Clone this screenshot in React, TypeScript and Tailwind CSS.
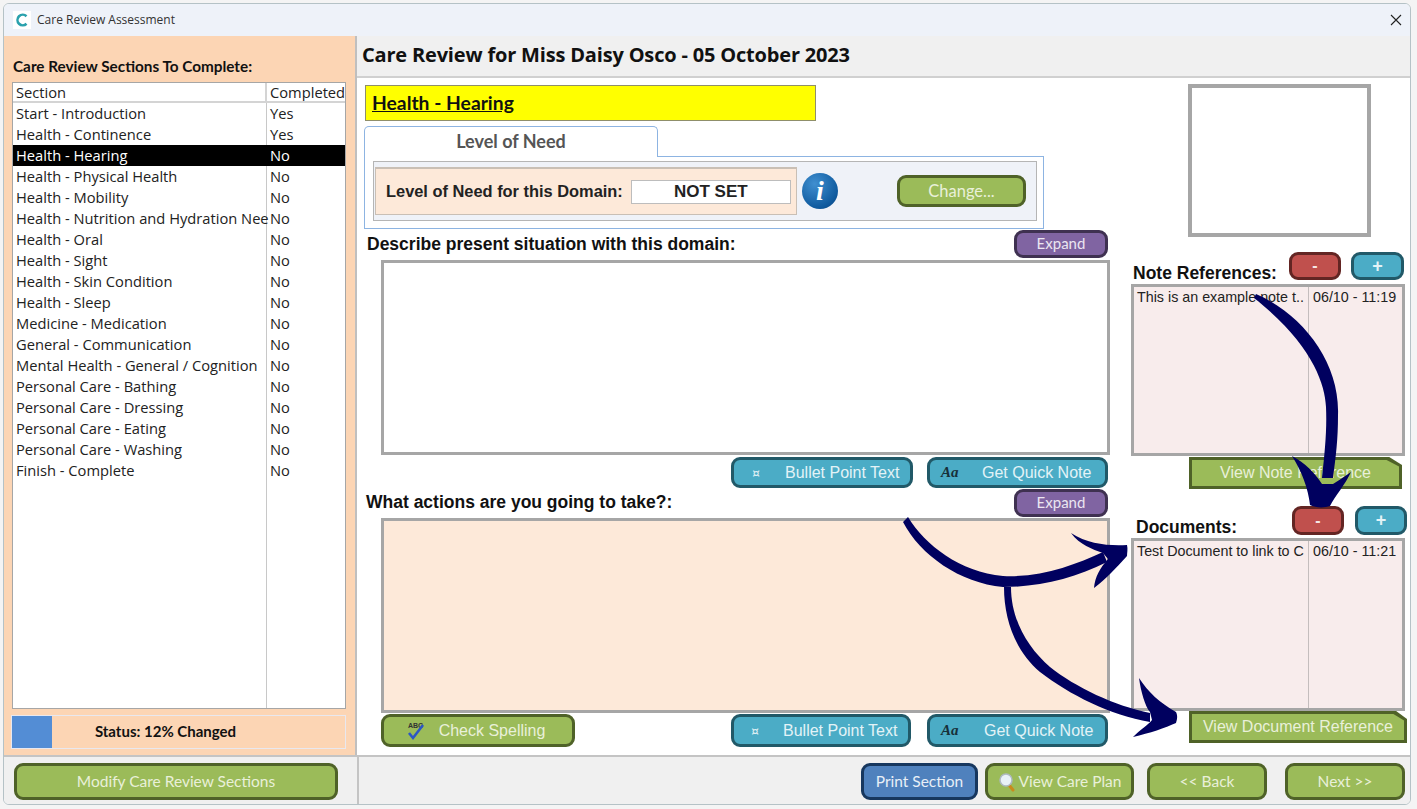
import type { ReactNode } from "react";

const sections: [string, string][] = [
  ["Start - Introduction", "Yes"],
  ["Health - Continence", "Yes"],
  ["Health - Hearing", "No"],
  ["Health - Physical Health", "No"],
  ["Health - Mobility", "No"],
  ["Health - Nutrition and Hydration Nee", "No"],
  ["Health - Oral", "No"],
  ["Health - Sight", "No"],
  ["Health - Skin Condition", "No"],
  ["Health - Sleep", "No"],
  ["Medicine - Medication", "No"],
  ["General - Communication", "No"],
  ["Mental Health - General / Cognition", "No"],
  ["Personal Care - Bathing", "No"],
  ["Personal Care - Dressing", "No"],
  ["Personal Care - Eating", "No"],
  ["Personal Care - Washing", "No"],
  ["Finish - Complete", "No"],
];

const green = "border-[#4f6228] bg-[#9bbb59] text-[#e9f0d9]";
const teal = "border-[#215968] bg-[#4bacc6] text-[#e3f3f7]";
const purple = "border-[#3f3151] bg-[#8064a2] text-[#ebe5f1]";
const red = "border-[#632523] bg-[#c0504d] text-[#f7e6e5]";
const blue = "border-[#17375e] bg-[#4f81bd] text-[#e8eff7]";

const calibri = "font-['Lato',sans-serif]";
const arial = "font-['Liberation_Sans',Arial,sans-serif]";
const segoe = "font-['Open_Sans',sans-serif]";

function Btn({
  color,
  className,
  children,
}: {
  color: string;
  className: string;
  children: ReactNode;
}) {
  return (
    <button
      type="button"
      className={`flex shrink-0 items-center justify-center rounded-[9px] border-[3px] ${color} ${className}`}
    >
      {children}
    </button>
  );
}

function BulletBtn({ className, iconWidth }: { className: string; iconWidth: string }) {
  return (
    <Btn color={teal} className={`h-full text-[16px] ${arial} ${className}`}>
      <span className={`${iconWidth} pr-[7px] text-center font-['DejaVu_Sans',sans-serif] text-[12px]`}>¤</span>
      <span className="flex-1 text-left">Bullet Point Text</span>
    </Btn>
  );
}

function NoteBtn({ className, iconWidth }: { className: string; iconWidth: string }) {
  return (
    <Btn color={teal} className={`h-full text-[16px] ${arial} ${className}`}>
      <span className={`${iconWidth} pl-[11px] text-left font-['Liberation_Serif',serif] text-[15px] font-bold italic text-[#17303a]`}>
        Aa
      </span>
      <span className="flex-1 text-left">Get Quick Note</span>
    </Btn>
  );
}

function RefList({ text, time, className }: { text: string; time: string; className: string }) {
  return (
    <div className={`flex border-[3px] border-[#a6a6a6] bg-[#f8ecec] text-[14.3px] leading-[18px] text-[#222] ${arial} ${className}`}>
      <div className="w-[175px] shrink-0 whitespace-nowrap border-r border-[#c4bdbd] pl-[3px] pt-[1px]">
        {text}
      </div>
      <div className="pl-[4px] pt-[1px] whitespace-nowrap">{time}</div>
    </div>
  );
}

function SpellIcon() {
  return (
    <svg width="22" height="22" viewBox="0 0 22 22" className="shrink-0">
      <text x="3" y="8" fontSize="7" fontWeight="700" fill="#333" fontFamily="Liberation Sans">
        ABC
      </text>
      <path d="M4 13l4 5L18 5" fill="none" stroke="#2b56c6" strokeWidth="2.6" />
    </svg>
  );
}

function LensIcon() {
  return (
    <svg width="18" height="20" viewBox="0 0 18 20" className="shrink-0">
      <path d="M11 13l4 5" stroke="#c98a1b" strokeWidth="3" strokeLinecap="round" />
      <circle cx="8" cy="8" r="6" fill="#e8f1f8" stroke="#aeb9c2" strokeWidth="1.5" />
    </svg>
  );
}

// hand drawn arrows over the form
function Arrows() {
  return (
    <svg
      className="pointer-events-none absolute left-0 top-0 z-20"
      width="1417"
      height="809"
      viewBox="0 0 1417 809"
    >
      <g fill="#00005f">
        <path d="M1256 294C1302 314 1340 362 1338 415C1338 440 1336 455 1333 478L1322 478C1325 450 1327 430 1326 407C1325 382 1310 342 1254 298Z" />
        <path d="M1292 456C1305 463 1315 473 1322 484L1333 484C1338 481 1344 477 1351 472C1345 485 1335 496 1330 506C1325 508 1315 508 1310 505C1308 488 1302 472 1292 456Z" />
        <path d="M908 517C925 545 960 572 1003 576C1040 578 1075 565 1103 552L1107 562C1075 578 1040 587 1003 587C960 583 920 555 903 522Z" />
        <path d="M1071 533C1088 544 1108 546 1127 545C1128 549 1127 553 1127 556C1116 568 1105 580 1094 588C1095 577 1100 568 1108 559L1103 553C1092 549 1080 545 1071 533Z" />
        <path d="M1011 587C1011 620 1028 648 1050 667C1075 687 1115 706 1150 713L1150 722C1110 715 1070 695 1040 672C1016 652 1004 620 1004 587Z" />
        <path d="M1139 678C1148 692 1160 703 1176 712C1178 716 1177 720 1176 723C1165 728 1150 733 1133 737C1140 730 1148 725 1152 720L1150 712C1145 706 1141 692 1139 678Z" />
      </g>
    </svg>
  );
}

export default function App() {
  return (
    <div className="relative h-[809px] w-[1417px] overflow-hidden bg-[#f4f4f4] pl-[3px] pr-[6px] pt-[3px] pb-[4px]">
      <div className="flex h-full flex-col overflow-hidden rounded-[6px] border border-[#b5c2c6] bg-white">
        <div className="flex h-[32px] shrink-0 items-center bg-[#eef2f9] pl-[9px] pr-[7px]">
          <div className="flex h-[18px] w-[18px] items-center justify-center bg-white">
            <svg width="14" height="14" viewBox="0 0 14 14">
              <path d="M11.5 3.2A5.3 5.3 0 1 0 11.5 10.8" fill="none" stroke="#2aa1ad" strokeWidth="2.6" />
            </svg>
          </div>
          <span className={`ml-[6px] flex-1 text-[12px] text-[#333] ${segoe}`}>Care Review Assessment</span>
          <svg width="14" height="14" viewBox="0 0 14 14">
            <path d="M2 2l10 10M12 2L2 12" stroke="#222" strokeWidth="1.1" />
          </svg>
        </div>

        <div className="flex min-h-0 flex-1">
          {/* left side: section list */}
          <div className="flex w-[353px] shrink-0 flex-col border-r-2 border-[#bfbfbf] bg-[#fcd5b4] pl-[8px] pr-[9px]">
            <div className={`mt-[19px] h-[27px] pl-[1px] text-[15.3px] font-bold leading-[22px] text-[#111] ${calibri}`}>
              Care Review Sections To Complete:
            </div>
            <div className="flex h-[627px] flex-col border border-[#a6a6a6] bg-white">
              <div className={`flex h-[20px] shrink-0 border-b-2 border-[#d4d4d4] text-[14.7px] leading-[19px] text-[#222] ${segoe}`}>
                <div className="w-[254px] shrink-0 border-r-2 border-[#d4d4d4] pl-[3px]">Section</div>
                <div className="overflow-hidden whitespace-nowrap pl-[3px]">Completed</div>
              </div>
              <div className={`relative flex-1 text-[14.7px] leading-[21px] text-[#222] ${segoe}`}>
                <div className="absolute bottom-0 left-[253px] top-0 w-px bg-[#c8c8c8]" />
                {sections.map(([name, done]) => (
                  <div
                    key={name}
                    className={`relative flex h-[21px] ${name === "Health - Hearing" ? "bg-black text-white" : ""}`}
                  >
                    <div className="w-[254px] shrink-0 whitespace-nowrap pl-[3px]">{name}</div>
                    <div className="pl-[3px]">{done}</div>
                  </div>
                ))}
              </div>
            </div>
            <div className="-ml-[1px] mt-[6px] flex h-[34px] border border-[#e8e8ef] bg-[#fcd5b4]">
              <div className="w-[40px] bg-[#538dd5]" />
              <div className={`flex-1 pr-[66px] text-center text-[15px] font-bold leading-[31px] text-[#111] ${calibri}`}>
                Status: 12% Changed
              </div>
            </div>
          </div>

          {/* right side */}
          <div className="flex min-w-0 flex-1 flex-col">
            <div className="flex h-[42px] shrink-0 items-center border-b-2 border-[#d0d0d0] bg-[#f0f0f0] pb-[3px] pl-[5px]">
              <span className={`text-[20px] font-bold text-[#111] ${segoe} tracking-[-0.18px]`}>
                Care Review for Miss Daisy Osco - 05 October 2023
              </span>
            </div>

            <div className="flex min-h-0 flex-1">
              <div className="ml-[7px] mt-[7px] flex w-[746px] shrink-0 flex-col">
                <div className={`ml-[1px] flex h-[36px] w-[451px] items-center border border-[#8f8f6a] bg-[#ffff00] pl-[6px] text-[19.3px] font-bold text-[#111] underline ${calibri}`}>
                  Health - Hearing
                </div>
                <div className={`relative z-10 mt-[5px] flex h-[31px] w-[294px] items-center justify-center rounded-t-[5px] border border-b-0 border-[#8db4e2] bg-white pb-[2px] text-[18px] font-bold text-[#555] ${calibri}`}>
                  Level of Need
                </div>
                <div className="-mt-px h-[73px] w-[680px] border border-[#8db4e2] bg-white pl-[8px] pr-[6px] pt-[4px]">
                  <div className="flex h-[60px] items-center border border-[#b5b5b5] bg-[#eff2f8] pl-[1px]">
                    <div className={`flex h-[48px] w-[422px] shrink-0 items-center border border-t-2 border-[#c9bfb5] bg-[#fde9d9] pl-[10px] text-[16.4px] font-bold text-[#222] ${arial}`}>
                      <span className="whitespace-nowrap">Level of Need for this Domain:</span>
                      <div className="ml-[8px] flex h-[24px] w-[160px] items-center justify-center border border-[#bdbdbd] bg-white text-[17px] text-[#222]">
                        NOT SET
                      </div>
                    </div>
                    <div className="ml-[5px] flex h-[36px] w-[36px] items-center justify-center rounded-full bg-[radial-gradient(circle_at_35%_30%,#3f8fd0,#0f5a9e_70%,#0a3f78)] font-['Liberation_Serif',serif] text-[28px] font-bold italic text-white">
                      i
                    </div>
                    <Btn color={green} className={`ml-[59px] h-[32px] w-[129px] text-[16.5px] ${calibri}`}>
                      Change...
                    </Btn>
                  </div>
                </div>

                <div className="mt-[1px] flex h-[28px] items-center justify-between">
                  <span className={`pl-[3px] pt-[1px] text-[17.5px] font-bold leading-none text-[#111] ${arial}`}>
                    Describe present situation with this domain:
                  </span>
                  <Btn color={purple} className={`mr-[2px] h-[28px] w-[94px] pb-[2px] text-[15px] ${calibri}`}>
                    Expand
                  </Btn>
                </div>
                <div className="ml-[17px] mt-[2px] h-[195px] w-[729px] border-[3px] border-[#a6a6a6] bg-white" />
                <div className="mt-[2px] flex h-[31px] justify-end gap-[14px] pr-[2px]">
                  <BulletBtn className="w-[182px]" iconWidth="w-[51px]" />
                  <NoteBtn className="w-[181px]" iconWidth="w-[52px]" />
                </div>

                <div className="mt-[1px] flex h-[28px] items-center justify-between">
                  <span className={`pl-[2px] text-[17.5px] font-bold leading-none text-[#111] ${arial}`}>
                    What actions are you going to take?:
                  </span>
                  <Btn color={purple} className={`mr-[2px] h-[28px] w-[94px] pb-[2px] text-[15px] ${calibri}`}>
                    Expand
                  </Btn>
                </div>
                <div className="ml-[17px] mt-[1px] h-[195px] w-[729px] border-[3px] border-[#a6a6a6] bg-[#fde9d9]" />
                <div className="mt-[1px] flex h-[33px]">
                  <Btn color={green} className={`ml-[17px] h-full w-[194px] gap-[12px] pr-[6px] text-[16px] ${arial}`}>
                    <SpellIcon />
                    Check Spelling
                  </Btn>
                  <div className="ml-auto flex h-full gap-[16px] pr-[2px]">
                    <BulletBtn className="w-[180px]" iconWidth="w-[49px]" />
                    <NoteBtn className="w-[181px]" iconWidth="w-[54px]" />
                  </div>
                </div>
              </div>

              <div className="ml-[21px] flex w-[276px] shrink-0 flex-col">
                <div className="ml-[57px] mt-[6px] h-[153px] w-[183px] border-[4px] border-[#a6a6a6] bg-white" />
                <div className="mt-[15px] flex h-[32px]">
                  <span className={`w-[158px] self-end pl-[2px] text-[17.5px] font-bold leading-[22px] text-[#111] ${arial}`}>
                    Note References:
                  </span>
                  <Btn color={red} className={`h-[28px] w-[52px] text-[16px] font-bold ${arial}`}>-</Btn>
                  <Btn color={teal} className={`ml-[10px] h-[28px] w-[53px] text-[18px] font-bold ${arial}`}>+</Btn>
                </div>
                <RefList className="h-[172px] w-[274px]" text="This is an example note t.." time="06/10 - 11:19" />
                <div
                  className={`ml-[58px] mt-[1px] flex h-[32px] w-[213px] items-center justify-center bg-[#4f6228] text-[16px] text-[#e9f0d9] [clip-path:polygon(0_0,94%_0,100%_25%,100%_100%,0_100%)] ${arial}`}
                >
                  <div className="flex h-[26px] w-[207px] items-center justify-center bg-[#9bbb59] [clip-path:polygon(0_0,94%_0,100%_25%,100%_100%,0_100%)]">
                    View Note Reference
                  </div>
                </div>
                <div className="mt-[17px] flex h-[32px]">
                  <span className={`w-[161px] self-end pl-[5px] text-[17.5px] font-bold leading-[22px] text-[#111] ${arial}`}>
                    Documents:
                  </span>
                  <Btn color={red} className={`h-[29px] w-[52px] text-[16px] font-bold ${arial}`}>-</Btn>
                  <Btn color={teal} className={`ml-[11px] h-[29px] w-[52px] text-[18px] font-bold ${arial}`}>+</Btn>
                </div>
                <RefList className="h-[173px] w-[274px]" text="Test Document to link to C" time="06/10 - 11:21" />
                <div
                  className={`ml-[58px] flex h-[32px] w-[218px] items-center justify-center bg-[#4f6228] text-[16px] text-[#e9f0d9] [clip-path:polygon(0_0,95%_0,100%_25%,100%_100%,0_100%)] ${arial}`}
                >
                  <div className="flex h-[26px] w-[212px] items-center justify-center bg-[#9bbb59] [clip-path:polygon(0_0,95%_0,100%_25%,100%_100%,0_100%)]">
                    View Document Reference
                  </div>
                </div>
              </div>
            </div>
          </div>
        </div>

        <div className="flex h-[49px] shrink-0 items-start border-t-2 border-[#c4c4c4] bg-[#f0f0f0] pt-[6px]">
          <div className="w-[353px] shrink-0 pl-[10px]">
            <Btn color={green} className={`h-[37px] w-[324px] text-[15.5px] ${calibri}`}>
              Modify Care Review Sections
            </Btn>
          </div>
          <div className="-mt-[6px] h-[49px] w-[2px] bg-[#c4c4c4]" />
          <div className={`flex flex-1 justify-end pr-[5px] text-[15.5px] ${calibri}`}>
            <Btn color={blue} className="h-[37px] w-[117px]">Print Section</Btn>
            <Btn color={green} className="ml-[7px] h-[37px] w-[149px] gap-[3px]">
              <LensIcon />
              View Care Plan
            </Btn>
            <Btn color={green} className="ml-[13px] h-[37px] w-[120px]">&lt;&lt; Back</Btn>
            <Btn color={green} className="ml-[18px] h-[37px] w-[120px]">Next &gt;&gt;</Btn>
          </div>
        </div>
      </div>
      <Arrows />
    </div>
  );
}
